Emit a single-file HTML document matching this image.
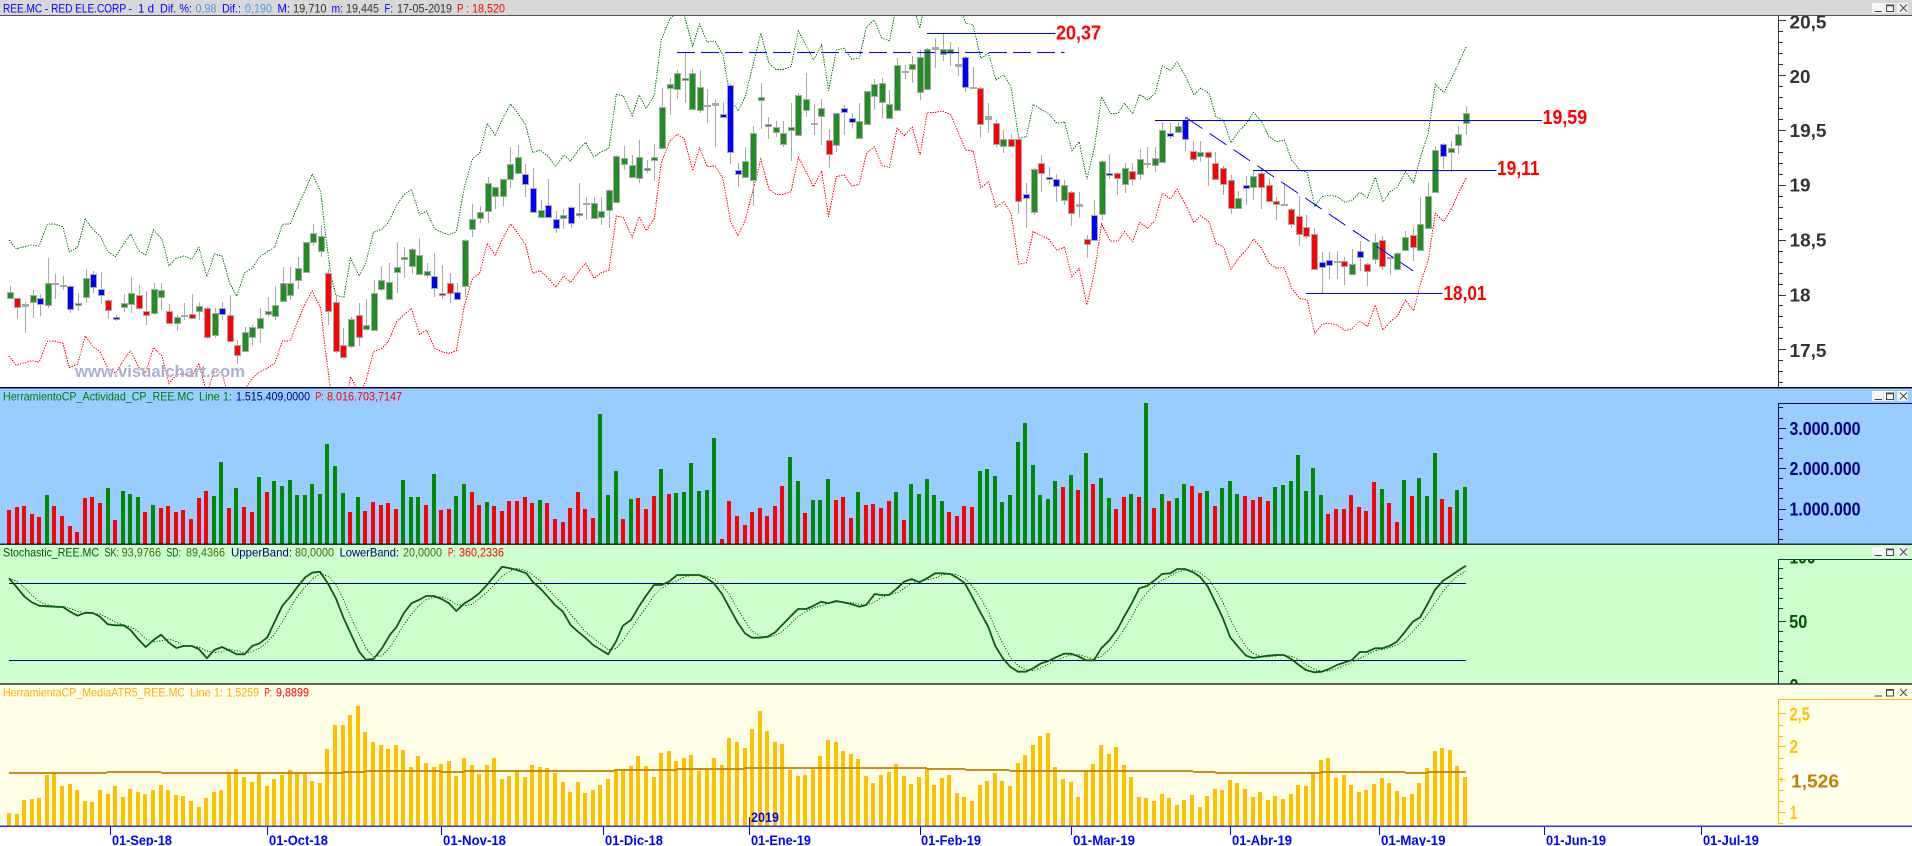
<!DOCTYPE html>
<html><head><meta charset="utf-8"><title>REE.MC</title>
<style>
html,body{margin:0;padding:0;background:#fff;width:1912px;height:846px;overflow:hidden}
svg{display:block;font-family:"Liberation Sans",sans-serif}
.t{font-size:12px}
.a{font-size:18px;font-weight:bold}
.d{font-size:14px;font-weight:bold;fill:#0000ff}
.l{font-size:20px;font-weight:bold;fill:#ff0000}
</style></head><body>
<svg id="s" xmlns="http://www.w3.org/2000/svg" width="1912" height="846" viewBox="0 0 1912 846" lengthAdjust="spacingAndGlyphs">
<defs>
<clipPath id="cm"><rect x="0" y="16" width="1777" height="372"/></clipPath>
<clipPath id="cs"><rect x="1779" y="560" width="133" height="124"/></clipPath>
</defs>
<rect x="0" y="0" width="1912" height="15" fill="#d8d8d8"/>
<rect x="0" y="15" width="1912" height="1" fill="#555"/>
<rect x="0" y="16" width="1912" height="372" fill="#fff"/>
<rect x="0" y="388" width="1912" height="156" fill="#99ccff"/>
<rect x="0" y="544" width="1912" height="140" fill="#ccffcc"/>
<rect x="0" y="684" width="1912" height="142" fill="#ffffe8"/>
<rect x="0" y="827" width="1912" height="19" fill="#fff"/>

<g id="main" clip-path="url(#cm)"></g>
<text x="75" y="377" font-size="16.5" font-weight="bold" fill="#aab0d2" textLength="170" lengthAdjust="spacingAndGlyphs">www.visualchart.com</text>
<g id="panels"></g>
<rect x="0" y="387" width="1912" height="1.4" fill="#000"/>
<rect x="0" y="543.6" width="1912" height="1.2" fill="#000"/>
<rect x="0" y="683.4" width="1912" height="1.2" fill="#000"/>
<rect x="0" y="825.6" width="1912" height="1.2" fill="#0000ff"/>
<g id="axes"></g>

<!-- Title 1 -->
<g class="t">
<text x="3" y="12.3" fill="#0000ff" textLength="129" lengthAdjust="spacingAndGlyphs">REE.MC - RED ELE.CORP -</text>
<text x="138" y="12.3" fill="#0000ff" textLength="16" lengthAdjust="spacingAndGlyphs">1 d</text>
<text x="160" y="12.3" fill="#0000ff" textLength="32" lengthAdjust="spacingAndGlyphs">Dif. %:</text>
<text x="195.5" y="12.3" fill="#4a9ae8" textLength="21" lengthAdjust="spacingAndGlyphs">0,98</text>
<text x="222" y="12.3" fill="#0000ff" textLength="19" lengthAdjust="spacingAndGlyphs">Dif.:</text>
<text x="245" y="12.3" fill="#4a9ae8" textLength="27" lengthAdjust="spacingAndGlyphs">0,190</text>
<text x="277.5" y="12.3" fill="#0000ff" textLength="12.5" lengthAdjust="spacingAndGlyphs">M:</text>
<text x="293" y="12.3" fill="#333" textLength="33.5" lengthAdjust="spacingAndGlyphs">19,710</text>
<text x="331.5" y="12.3" fill="#0000ff" textLength="11.5" lengthAdjust="spacingAndGlyphs">m:</text>
<text x="346" y="12.3" fill="#333" textLength="33" lengthAdjust="spacingAndGlyphs">19,445</text>
<text x="384.5" y="12.3" fill="#0000ff" textLength="8.5" lengthAdjust="spacingAndGlyphs">F:</text>
<text x="397" y="12.3" fill="#333" textLength="55" lengthAdjust="spacingAndGlyphs">17-05-2019</text>
<text x="457" y="12.3" fill="#ff0000" textLength="12" lengthAdjust="spacingAndGlyphs">P :</text>
<text x="472" y="12.3" fill="#ff0000" textLength="33" lengthAdjust="spacingAndGlyphs">18,520</text>
<!-- Title 2 -->
<text x="3" y="400.3" fill="#008000" textLength="191" lengthAdjust="spacingAndGlyphs">HerramientoCP_Actividad_CP_REE.MC</text>
<text x="199" y="400.3" fill="#008000" textLength="33" lengthAdjust="spacingAndGlyphs">Line 1:</text>
<text x="236" y="400.3" fill="#000080" textLength="74" lengthAdjust="spacingAndGlyphs">1.515.409,0000</text>
<text x="315.5" y="400.3" fill="#ff0000" textLength="8.2" lengthAdjust="spacingAndGlyphs">P:</text>
<text x="327" y="400.3" fill="#ff0000" textLength="75" lengthAdjust="spacingAndGlyphs">8.016.703,7147</text>
<!-- Title 3 -->
<text x="3" y="556.3" fill="#005500" textLength="96" lengthAdjust="spacingAndGlyphs">Stochastic_REE.MC</text>
<text x="104.5" y="556.3" fill="#005500" textLength="14.5" lengthAdjust="spacingAndGlyphs">SK:</text>
<text x="121.6" y="556.3" fill="#3f6f00" textLength="39.5" lengthAdjust="spacingAndGlyphs">93,9766</text>
<text x="166.5" y="556.3" fill="#005500" textLength="14.5" lengthAdjust="spacingAndGlyphs">SD:</text>
<text x="186" y="556.3" fill="#3f6f00" textLength="39" lengthAdjust="spacingAndGlyphs">89,4366</text>
<text x="231" y="556.3" fill="#000080" textLength="61" lengthAdjust="spacingAndGlyphs">UpperBand:</text>
<text x="295" y="556.3" fill="#3f6f00" textLength="39" lengthAdjust="spacingAndGlyphs">80,0000</text>
<text x="339.6" y="556.3" fill="#000080" textLength="59.4" lengthAdjust="spacingAndGlyphs">LowerBand:</text>
<text x="403" y="556.3" fill="#3f6f00" textLength="39" lengthAdjust="spacingAndGlyphs">20,0000</text>
<text x="448" y="556.3" fill="#ff0000" textLength="7.5" lengthAdjust="spacingAndGlyphs">P:</text>
<text x="459" y="556.3" fill="#ff0000" textLength="45" lengthAdjust="spacingAndGlyphs">360,2336</text>
<!-- Title 4 -->
<text x="3" y="696.3" fill="#ffb000" textLength="182" lengthAdjust="spacingAndGlyphs">HerramientaCP_MediaATR5_REE.MC</text>
<text x="190" y="696.3" fill="#ffb000" textLength="33" lengthAdjust="spacingAndGlyphs">Line 1:</text>
<text x="226.5" y="696.3" fill="#ffb000" textLength="32.5" lengthAdjust="spacingAndGlyphs">1,5259</text>
<text x="264.5" y="696.3" fill="#ff0000" textLength="7.5" lengthAdjust="spacingAndGlyphs">P:</text>
<text x="276" y="696.3" fill="#ff0000" textLength="33" lengthAdjust="spacingAndGlyphs">9,8899</text>
</g>

<!-- price labels on chart -->
<text class="l" x="1056" y="39.5" textLength="45" lengthAdjust="spacingAndGlyphs">20,37</text>
<text class="l" x="1542.6" y="124" textLength="44.5" lengthAdjust="spacingAndGlyphs">19,59</text>
<text class="l" x="1497" y="175" textLength="42.5" lengthAdjust="spacingAndGlyphs">19,11</text>
<text class="l" x="1443.5" y="300" textLength="43" lengthAdjust="spacingAndGlyphs">18,01</text>

<!-- Axis labels -->
<g class="a" fill="#333">
<text x="1789.5" y="28.3" textLength="37" lengthAdjust="spacingAndGlyphs">20,5</text>
<text x="1789.5" y="83" textLength="21" lengthAdjust="spacingAndGlyphs">20</text>
<text x="1789.5" y="137" textLength="37" lengthAdjust="spacingAndGlyphs">19,5</text>
<text x="1789.5" y="191.7" textLength="21" lengthAdjust="spacingAndGlyphs">19</text>
<text x="1789.5" y="246.7" textLength="37" lengthAdjust="spacingAndGlyphs">18,5</text>
<text x="1789.5" y="301.7" textLength="21" lengthAdjust="spacingAndGlyphs">18</text>
<text x="1789.5" y="357" textLength="37" lengthAdjust="spacingAndGlyphs">17,5</text>
</g>
<g class="a" fill="#000080">
<text x="1789.5" y="435" textLength="71" lengthAdjust="spacingAndGlyphs">3.000.000</text>
<text x="1789.5" y="475" textLength="71" lengthAdjust="spacingAndGlyphs">2.000.000</text>
<text x="1789.5" y="515.7" textLength="71" lengthAdjust="spacingAndGlyphs">1.000.000</text>
</g>
<g class="a" fill="#005000" clip-path="url(#cs)">
<text x="1789.5" y="563.7" textLength="26" lengthAdjust="spacingAndGlyphs">100</text>
<text x="1789.3" y="628.2" textLength="18" lengthAdjust="spacingAndGlyphs">50</text>
<text x="1789.5" y="692" textLength="9" lengthAdjust="spacingAndGlyphs">0</text>
</g>
<g class="a" fill="#ffc000">
<text x="1789.5" y="720.7" textLength="20.4" lengthAdjust="spacingAndGlyphs">2,5</text>
<text x="1789.5" y="753" textLength="8.5" lengthAdjust="spacingAndGlyphs">2</text>
<text x="1790" y="819" textLength="7" lengthAdjust="spacingAndGlyphs">1</text>
</g>
<rect x="1788" y="763" width="54.6" height="29" fill="#fffff4"/>
<text x="1791" y="787.3" font-size="18" font-weight="bold" fill="#bf8000" textLength="48" lengthAdjust="spacingAndGlyphs">1,526</text>
<path d="M1785 779.5h-5m2.5-2.5l-2.5 2.5 2.5 2.5" fill="none" stroke="#ffc000" stroke-width="1"/>

<!-- Dates -->
<g class="d">
<text x="112" y="845" textLength="60" lengthAdjust="spacingAndGlyphs">01-Sep-18</text>
<text x="269" y="845" textLength="59" lengthAdjust="spacingAndGlyphs">01-Oct-18</text>
<text x="443" y="845" textLength="63" lengthAdjust="spacingAndGlyphs">01-Nov-18</text>
<text x="605" y="845" textLength="58" lengthAdjust="spacingAndGlyphs">01-Dic-18</text>
<text x="751" y="845" textLength="60" lengthAdjust="spacingAndGlyphs">01-Ene-19</text>
<text x="921" y="845" textLength="60" lengthAdjust="spacingAndGlyphs">01-Feb-19</text>
<text x="1073" y="845" textLength="62" lengthAdjust="spacingAndGlyphs">01-Mar-19</text>
<text x="1232" y="845" textLength="60" lengthAdjust="spacingAndGlyphs">01-Abr-19</text>
<text x="1381" y="845" textLength="64.5" lengthAdjust="spacingAndGlyphs">01-May-19</text>
<text x="1546" y="845" textLength="60" lengthAdjust="spacingAndGlyphs">01-Jun-19</text>
<text x="1703" y="845" textLength="56" lengthAdjust="spacingAndGlyphs">01-Jul-19</text>
<text x="751" y="822" textLength="28" lengthAdjust="spacingAndGlyphs">2019</text>
</g>
<g id="btn"></g>
</svg>
<script>
(function(){
var NS="http://www.w3.org/2000/svg";
function el(p,n,a){var e=document.createElementNS(NS,n);for(var k in a)e.setAttribute(k,a[k]);p.appendChild(e);return e;}
var main=document.getElementById('main'),pan=document.getElementById('panels'),axes=document.getElementById('axes'),btn=document.getElementById('btn');
function X(i){return 9.8+7.583*i;}
function conv(list,x0,y0){var r=[];for(var i=0;i<list.length;i+=2){r.push([x0+list[i]/2.45,y0+list[i+1]/3]);}return r;}
function pts(a){return a.map(function(p){return p[0].toFixed(1)+','+p[1].toFixed(1)}).join(' ');}

/* candles: colour top bot wickTop wickBot (zoom px /3) */
var C="G 875 895 858 895|R 893 921 893 957|D 913 918 905 998|G 884 906 870 955|B 893 913 882 947|G 848 915 773 925|D 848 851 822 897|D 856 859 828 870|B 857 927 855 940|G 908 916 880 933|G 833 892 808 910|B 821 862 813 880|B 866 886 816 912|R 899 930 897 957|B 950 958 945 962|G 908 921 882 936|G 878 912 831 938|R 884 925 855 930|R 932 946 872 975|G 866 940 850 945|G 869 892 848 930|R 932 969 912 972|G 950 969 945 992|D 946 949 910 960|R 941 955 882 958|G 917 934 905 960|R 923 1012 920 1018|G 938 1006 925 1014|B 923 942 905 960|R 944 1023 885 1025|R 1034 1065 1020 1092|G 995 1054 982 1056|G 980 1012 975 1038|G 953 985 925 1030|G 932 943 890 950|G 914 948 857 960|G 848 904 800 906|G 848 886 800 900|G 803 841 770 866|G 727 817 725 820|G 698 726 672 738|G 707 754 675 770|R 818 933 808 975|R 905 1053 885 1060|R 1034 1071 985 1072|G 956 1039 950 1043|R 944 1012 910 1038|G 974 988 897 992|G 878 990 840 992|G 839 868 798 872|G 845 898 790 900|G 800 817 726 878|G 770 778 742 833|G 746 798 745 822|G 764 822 715 825|G 812 826 790 835|B 827 864 758 890|R 878 884 796 898|R 848 878 818 908|B 875 897 848 899|G 719 859 717 892|G 656 688 612 710|G 637 654 618 668|G 550 634 532 668|G 562 589 562 627|G 538 589 538 618|G 493 538 440 565|G 472 520 435 522|B 521 553 492 590|B 563 636 505 638|G 629 652 600 653|B 614 651 538 652|B 656 684 632 700|G 646 653 628 686|B 620 669 618 685|G 640 646 548 655|D 608 611 592 660|G 608 654 590 656|G 634 652 590 675|G 569 631 568 683|G 467 606 465 608|G 473 492 438 510|G 494 532 465 535|G 470 534 420 550|"+
"G 503 511 480 520|G 470 481 432 542|G 320 445 264 446|G 251 265 235 345|G 218 268 210 296|G 233 241 157 310|G 218 328 206 330|G 260 331 210 338|D 316 318 267 368|D 310 314 297 440|B 341 352 305 354|B 254 457 252 492|B 509 523 490 560|G 482 532 442 534|G 398 541 378 618|G 290 301 250 386|G 371 379 351 416|G 382 397 362 412|G 398 433 363 440|G 380 391 310 482|G 284 406 280 408|G 296 331 218 350|D 369 371 312 405|G 325 347 296 435|R 421 463 388 505|G 340 436 338 456|B 323 337 315 405|B 355 366 340 385|G 362 415 308 418|G 274 373 272 375|G 253 289 238 330|G 250 307 235 355|G 313 355 270 358|G 196 331 175 333|D 213 216 195 238|G 193 208 168 250|G 172 277 150 300|G 146 268 144 270|D 142 146 115 205|G 146 163 100 182|G 146 159 126 198|D 193 199 142 228|B 170 262 168 276|D 262 265 202 265|R 263 373 261 415|D 349 356 310 400|R 368 433 360 440|G 416 439 390 458|R 416 439 402 442|R 416 604 400 642|B 581 595 550 683|G 506 637 504 644|R 488 520 466 575|B 530 538 502 552|B 536 559 522 605|G 554 601 540 615|R 575 640 573 678|D 613 619 575 655|R 718 731 705 773|B 644 720 600 722|G 482 642 480 660|B 518 526 462 537|R 518 534 515 585|G 503 553 490 580|R 512 538 490 558|G 476 522 446 540|R 488 493 442 505|G 473 496 440 515|G 389 487 365 488|B 398 408 370 418|G 377 397 367 400|B 360 417 352 452|R 452 478 422 485|G 455 469 422 485|R 455 472 455 558|R 488 538 455 540|R 503 552 497 585|R 539 624 525 642|G 593 624 572 626|B 554 565 528 615|G 527 562 510 600|R 520 562 508 628|R 554 604 534 606|R 604 612 590 660|"+
"D 611 613 548 615|R 626 673 625 685|R 647 703 588 738|R 680 709 645 718|R 701 807 685 809|B 785 801 756 880|B 779 795 755 838|D 784 786 752 838|R 782 798 770 855|G 791 822 748 824|B 752 771 722 812|R 791 814 788 858|G 725 778 702 792|R 719 798 708 810|D 771 773 770 825|G 758 808 756 810|G 710 751 693 753|R 704 741 680 782|G 672 751 590 753|G 587 685 546 687|G 449 577 438 579|B 432 468 430 506|G 443 456 422 515|G 401 436 378 462|G 338 370 318 405";
var col={G:'#1f8f1f',R:'#ff0000',B:'#0000ff',D:'#a8a8a8'};

/* bands */
var gr=conv([22,720,40,747,59,740,78,735,96,738,116,673,133,672,154,680,170,755,190,742,209,657,228,690,245,708,264,755,283,770,303,732,320,702,340,752,357,765,376,690,397,718,414,797,432,775,450,768,470,778,487,742,507,830,525,762,544,768,563,850,580,888,599,818,618,805,636,770,655,755,673,742,692,673,711,672,729,620,748,570,765,522,786,575,795,680,810,820,823,885,842,893,859,775,880,828,896,790,915,697,936,688,951,668,972,615,989,585,1008,567,1028,645,1045,633,1065,687,1082,697,1100,704,1118,695,1138,560,1158,475,1175,460,1194,370,1213,405,1232,355,1251,312,1269,340,1288,375,1305,458,1323,450,1344,470,1362,500,1381,465,1398,483,1417,450,1435,427,1455,472,1473,455,1492,445,1510,283,1527,287,1549,347,1566,285],0,0)
.concat(conv([15,326,35,285,52,120,72,60,91,33,108,45,129,138,146,72,165,127,184,123,203,165,222,295,240,333,258,290,275,205,296,100,316,190,333,208,352,208,370,200,388,93,409,140,425,180,445,135,462,272,481,150,500,145,519,178,537,175,555,80,574,60,593,115,611,122,630,10,648,30,667,5,686,85,704,-40,741,-45,762,-40,779,-10,798,70,816,75,835,175,854,160,872,240,891,225,909,260,928,415,947,410,963,313,985,330,1001,340,1021,370,1040,365,1058,452,1076,425,1095,538,1113,445,1131,290,1152,340,1171,340,1187,310,1207,342,1224,283,1244,300,1262,280,1280,197,1300,212,1316,185,1337,230,1357,285,1373,265,1394,280,1411,350,1430,362,1448,428,1466,395,1486,370,1503,337,1523,365,1541,410,1560,425],640,0))
.concat(conv([30,420,48,480,68,510,86,517,105,618,123,590,141,585,160,590,179,607,197,600,215,577,234,593,253,532,272,605,290,575,307,562,327,515,347,548,364,470,383,400,400,253,421,278,440,235,457,190,476,140],1272,0));
var rd=conv([22,1068,40,1096,59,1088,78,1082,96,1086,116,1024,133,1023,154,1030,170,1103,190,1092,209,1008,228,1040,245,1055,264,1105,283,1120,303,1080,320,1052,340,1102,357,1118,376,1042,397,1068,414,1150,432,1125,450,1120,470,1130,487,1090,507,1180,525,1115,544,1120,563,1205,580,1240,599,1170,618,1135,636,1115,655,1105,673,1090,692,1023,711,1022,729,965,748,910,765,873,786,925,795,1030,810,1170,823,1235,842,1242,859,1130,880,1180,896,1145,915,1055,936,1045,951,1025,972,965,989,945,1008,925,1028,1003,1045,990,1065,1045,1082,1055,1100,1060,1118,1052,1138,915,1158,835,1175,820,1194,730,1213,765,1232,715,1251,672,1269,700,1288,735,1305,820,1323,812,1344,835,1362,862,1381,828,1398,848,1417,815,1435,790,1455,835,1473,818,1492,810,1510,648,1527,653,1549,712,1566,650],0,0)
.concat(conv([15,692,35,655,52,490,72,425,91,403,108,415,129,512,146,443,165,500,184,498,203,535,222,665,240,707,258,660,275,580,296,478,316,568,333,583,352,583,370,575,388,472,409,520,425,560,445,513,462,650,481,530,500,525,519,558,537,553,555,460,574,440,593,497,611,502,630,385,648,407,667,380,686,465,704,337,724,337,741,333,762,345,779,395,798,450,816,453,835,563,854,545,872,622,891,605,909,640,928,793,947,788,963,695,985,708,1001,717,1021,750,1040,742,1058,830,1076,805,1095,915,1113,820,1131,672,1152,723,1171,723,1187,695,1207,725,1224,667,1244,685,1262,660,1280,580,1300,597,1316,568,1337,615,1357,668,1373,647,1394,665,1411,730,1430,742,1448,808,1466,775,1486,750,1503,717,1523,745,1541,790,1560,805],640,0))
.concat(conv([30,802,48,865,68,895,86,900,105,1000,123,972,141,970,160,975,179,992,197,985,215,963,234,980,253,915,272,990,290,965,307,948,327,900,347,932,364,850,383,780,400,640,421,665,440,625,457,580,476,533],1272,0));
el(main,'polyline',{points:pts(gr),fill:'none',stroke:'#007800','stroke-width':'1','stroke-dasharray':'1.4 1.2','shape-rendering':'crispEdges'});
el(main,'polyline',{points:pts(rd),fill:'none',stroke:'#ff0000','stroke-width':'1','stroke-dasharray':'1.4 1.2','shape-rendering':'crispEdges'});

/* candles */
var wick='',items=C.split('|'),bodies={G:'',R:'',B:'',D:''};
items.forEach(function(s,i){
  var p=s.split(' '),x=Math.round(X(i)),t=Math.round(+p[1]/3),b=Math.round(+p[2]/3),wt=Math.round(+p[3]/3),wb=Math.round(+p[4]/3);
  wick+='M'+(x+.5)+' '+wt+'V'+wb;
  if(b-t<1)b=t+1;
  bodies[p[0]]+='M'+(x-2.5)+' '+(t+.5)+'h6v'+(b-t)+'h-6z';
});
el(main,'path',{d:wick,stroke:'#a8a8a8','stroke-width':'1',fill:'none','shape-rendering':'crispEdges'});
for(var k in bodies){el(main,'path',{d:bodies[k],fill:col[k],stroke:'#a8a8a8','stroke-width':'1','shape-rendering':'crispEdges'});}

/* chart lines */
function line(x1,y1,x2,y2,c,w,d){var a={x1:x1,y1:y1,x2:x2,y2:y2,stroke:c,'stroke-width':w||1,'shape-rendering':'crispEdges'};if(d)a['stroke-dasharray']=d;return a;}
var bl='#0000ff';
el(main,'line',line(927,33.5,1055.5,33.5,bl));
el(main,'line',line(677,52.5,1064.5,52.5,bl,1,'18 6'));
el(main,'line',line(1155,120.5,1542,120.5,bl));
el(main,'line',line(1253,170.5,1496.5,170.5,bl));
el(main,'line',line(1306,293.5,1442.6,293.5,bl));
el(main,'line',line(1185.7,117.3,1412.8,270.7,bl,1,'20.2 8.6'));

/* volume */
var V="R375 R366 R363 R387 R396 G330 R363 R393 R423 R441 R339 R336 R354 G309 R405 G318 G327 G336 R381 G360 R369 R363 R381 R375 R402 R339 R318 G333 G231 R369 G309 R366 R381 G276 R321 G288 G303 G285 G330 G330 G297 G327 G177 G243 G324 R381 G336 R378 R351 R360 R354 R372 G285 G336 G336 R360 G267 R375 R372 G333 G297 R321 R360 G351 R363 R378 R348 R348 R336 R354 G345 R354 R402 R411 R369 R321 R372 R399 G87 G330 G258 R402 G342 R339 "+
"R372 R333 G252 R327 G324 G321 G234 G318 G315 G159 R462 R348 R393 R420 R381 R369 R393 R363 R303 G216 G288 R384 G345 G345 G282 R345 R336 R399 G321 R360 R357 R369 R348 G321 R405 G297 G327 G282 G330 G348 R381 R393 R363 R366 G258 G252 G273 G351 G330 G171 G114 G240 G330 G342 G288 R306 G270 R315 G204 R297 G279 G339 R372 R336 G327 R336 G54 R369 G327 R348 G339 G297 R303 R324 G318 R363 G309 G288 G327 R333 R345 R336 R348 G306 "+
"G300 G288 G210 G318 G249 G330 R387 R372 R372 R330 R366 R378 R291 G312 R354 R411 G285 R333 G279 G333 G204 R342 R366 G315 G306";
var vr='',vg='';
V.split(' ').forEach(function(s,i){
  var x=Math.round(9+7.583*i)-2,t=Math.round(385+(+s.slice(1))/3),h=544-t;
  var d='M'+x+' '+t+'h4v'+h+'h-4z';
  if(s[0]=='R')vr+=d;else vg+=d;
});
el(pan,'path',{d:vr,fill:'#ff0000','shape-rendering':'crispEdges'});
el(pan,'path',{d:vg,fill:'#008a00','shape-rendering':'crispEdges'});

/* stochastic */
el(pan,'line',line(9,583.5,1466,583.5,'#000080'));
el(pan,'line',line(9,660.5,1466,660.5,'#000080'));
var sk=conv([22,580,40,605,60,635,78,652,96,662,116,664,133,665,154,666,172,680,190,692,209,683,228,684,245,695,264,718,283,721,303,721,320,735,338,762,357,786,376,765,395,749,414,773,432,789,450,783,470,783,487,792,507,820,525,795,544,786,563,797,580,808,599,808,618,783,636,775,655,757,673,710,692,662,711,635,729,605,748,577,765,563,784,560,803,595,823,640,842,700,859,745,880,800,896,824,915,822,936,790,955,750,972,725,989,685,1008,655,1026,645,1044,633,1063,633,1082,642,1100,655,1118,678,1138,655,1156,642,1174,625,1193,600,1210,575,1230,545,1250,550,1267,555,1290,565,1305,590,1325,612,1342,635,1360,660,1379,680,1398,720,1416,740,1433,757,1453,780,1473,795,1490,808,1509,770,1526,722,1546,705,1565,665],0,385)
.concat(conv([15,632,34,600,52,600,71,590,91,570,108,570,127,570,145,570,164,580,181,595,201,627,220,670,238,710,257,745,274,758,294,758,313,755,331,742,350,718,368,695,387,672,407,672,424,663,444,650,461,655,480,648,497,652,517,657,537,665,554,660,575,627,590,630,610,630,630,610,647,590,666,582,684,592,703,580,723,565,740,565,760,567,777,578,796,595,813,633,833,680,853,725,870,782,889,820,907,845,926,860,946,860,963,850,983,835,1000,828,1019,817,1039,806,1056,806,1076,815,1093,826,1112,826,1130,790,1149,767,1169,735,1186,695,1205,655,1223,610,1242,603,1262,585,1279,567,1299,565,1316,552,1335,552,1355,562,1372,575,1391,605,1409,650,1428,700,1446,757,1465,785,1485,812,1502,819,1522,815,1539,812,1558,810],640,385))
.concat(conv([29,810,47,822,66,840,83,855,103,862,122,860,140,852,159,840,176,833,196,825,215,801,232,801,252,790,270,790,289,782,306,770,326,740,345,710,363,697,382,655,399,615,419,587,438,572,456,557,475,542],1272,385));
var sd=sk.map(function(p,i){var a=sk[Math.max(0,i-2)],b=sk[Math.max(0,i-1)];return [p[0],(a[1]+b[1]+p[1])/3];});
el(pan,'polyline',{points:pts(sd),fill:'none',stroke:'#0a5c0a','stroke-width':'1','stroke-dasharray':'1.2 1.6','shape-rendering':'crispEdges'});
el(pan,'polyline',{points:pts(sk),fill:'none',stroke:'#0a5c0a','stroke-width':'1.8','stroke-linejoin':'round'});

/* ATR */
var A=[1284,1287,1245,1242,1239,1170,1164,1203,1197,1215,1248,1251,1215,1227,1203,1236,1212,1221,1227,1215,1200,1215,1230,1233,1248,1266,1239,1221,1215,1164,1152,1176,1191,1164,1203,1182,1170,1155,1164,1164,1188,1194,1092,1020,1020,990,963,1041,1071,1080,1092,1080,1095,1146,1113,1134,1146,1137,1128,1173,1119,1140,1167,1140,1119,1182,1173,1158,1176,1140,1146,1149,1164,1191,1221,1191,1224,1215,1200,1182,1158,1158,1143,1113,
1143,1176,1104,1098,1128,1119,1110,1158,1152,1119,1140,1059,1071,1089,1032,978,1038,1071,1077,1155,1173,1170,1152,1113,1065,1071,1098,1107,1122,1173,1194,1170,1161,1137,1173,1197,1176,1152,1200,1179,1170,1224,1236,1248,1200,1188,1164,1188,1203,1134,1110,1080,1053,1044,1146,1182,1191,1236,1158,1137,1080,1107,1086,1140,1176,1236,1239,1248,1227,1239,1260,1245,1230,1266,1233,1212,1215,1185,1194,1212,1236,1221,1245,1233,
1242,1227,1200,1203,1167,1125,1119,1179,1170,1200,1221,1215,1197,1179,1194,1218,1236,1227,1194,1149,1098,1089,1095,1143,1176];
var ad='';
A.forEach(function(v,i){var x=Math.round(9+7.583*i)-2,t=Math.round(385+v/3);ad+='M'+x+' '+t+'h4v'+(826-t)+'h-4z';});
el(pan,'path',{d:ad,fill:'#ffc000','shape-rendering':'crispEdges'});
var steps=[[22,1164,262],[262,1161,395],[395,1164,840],[840,1161,893],[893,1158,1080],[1080,1161,1137],[1137,1158,1505],[1505,1155,1568]];
var d='';
steps.forEach(function(s){d+='M'+(s[0]/2.45).toFixed(1)+' '+(385+s[1]/3).toFixed(1)+'H'+(s[2]/2.45).toFixed(1);});
[[0,1155,90],[90,1152,255],[255,1149,703],[703,1152,797],[797,1155,905],[905,1158,1355],[1355,1161,1410],[1410,1164,1568]].forEach(function(s){d+='M'+(640+s[0]/2.45).toFixed(1)+' '+(385+s[1]/3).toFixed(1)+'H'+(640+s[2]/2.45).toFixed(1);});
[[0,1164,120],[120,1161,326],[326,1164,382],[382,1161,475]].forEach(function(s){d+='M'+(1272+s[0]/2.45).toFixed(1)+' '+(385+s[1]/3).toFixed(1)+'H'+(1272+s[2]/2.45).toFixed(1);});
el(pan,'path',{d:d,fill:'none',stroke:'#bf8000','stroke-width':'1.8'});

/* axes */
function axis(c,top,bot,majors,minors){
  var a='M1778.5 '+top+'V'+bot+'M1778 '+(top+.5)+'H1912';
  majors.forEach(function(y){a+='M1779 '+(Math.round(y)+.5)+'h7';});
  minors.forEach(function(y){a+='M1779 '+(Math.round(y)+.5)+'h4';});
  el(axes,'path',{d:a,fill:'none',stroke:c,'stroke-width':'1','shape-rendering':'crispEdges'});
}
function zy(a,y0){return a.map(function(v){return y0+v/3;});}
var mn=[];for(var i=-1;i<34;i++){var y=20+i*10.98;if(Math.round(i)%5!=0&&y>16&&y<388)mn.push(y);}
var mj=[];for(i=0;i<7;i++)mj.push(20+i*54.9);
el(axes,'path',{d:'M1778.5 16V388'+mj.map(function(y){return 'M1779 '+(Math.round(y)+.5)+'h7'}).join('')+mn.map(function(y){return 'M1779 '+(Math.round(y)+.5)+'h4'}).join(''),fill:'none',stroke:'#333','stroke-width':'1','shape-rendering':'crispEdges'});
el(axes,'path',{d:'M1778.5 388V389',fill:'none',stroke:'#333'});
axis('#000080',403,544,zy([128,250,371],385),zy([67,98,158,188,218,280,310,340,401,431,461],385));
axis('#004040',559,684,[621],[567.7,577.7,587.7,597.7,607.7,631,641,651,661,671]);
axis('#ffc000',699,826,zy([985,1084,1282],385),zy([1019,1052,1118,1150,1183,1216,1249,1315],385));
var ticks=[110,267,441,603,749,920,1071,1230,1379,1544,1701],t='';
ticks.forEach(function(x){t+='M'+(x+.5)+' 827V835';});
t+='M749.5 817V827';
el(axes,'path',{d:t,fill:'none',stroke:'#0000ff','stroke-width':'1','shape-rendering':'crispEdges'});

/* window buttons */
function buttons(y,white,c){
  if(white){[[1872,11.5],[1884,10.5],[1897,11]].forEach(function(b){el(btn,'rect',{x:b[0],y:y,width:b[1],height:10,fill:'#f8f8f8'});});}
  var p='M1874.5 '+(y+8.5)+'h7.5'+
  'M1886.5 '+(y+2)+'h7v6.5h-7zM1886.5 '+(y+2.8)+'h7'+
  'M1900 '+(y+1.5)+'l7 7M1907 '+(y+1.5)+'l-7 7';
  el(btn,'path',{d:p,fill:'none',stroke:c,'stroke-width':'1'});
}
buttons(3,true,'#444');
buttons(391,true,'#444');
buttons(547,true,'#444');
buttons(687.5,false,'#444');
})();
</script>
</body></html>
